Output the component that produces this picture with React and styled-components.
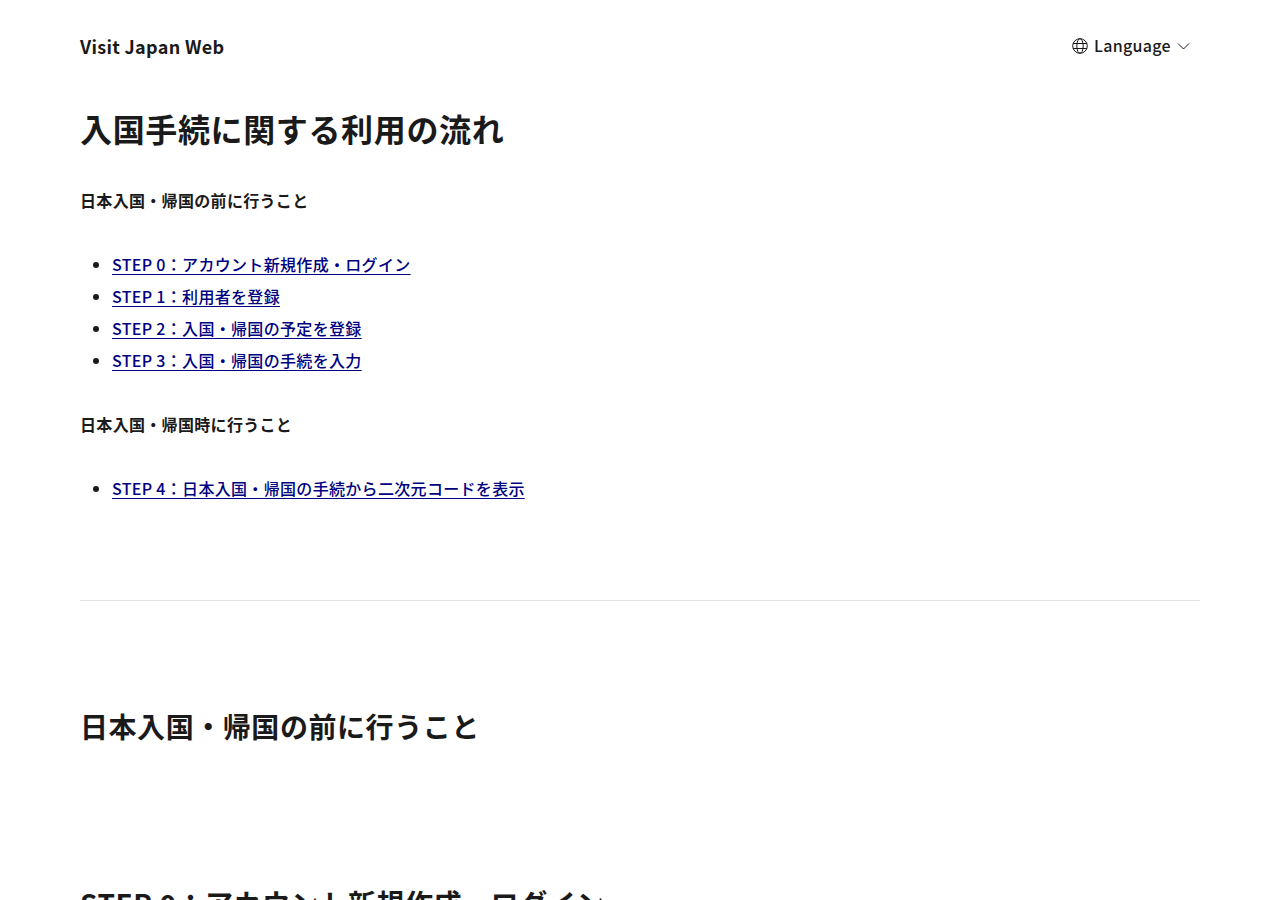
import styled, { createGlobalStyle } from "styled-components";

const GlobalStyle = createGlobalStyle`
  html, body {
    margin: 0;
    padding: 0;
    background: #fff;
    color: #1a1a1a;
    font-family: "Noto Sans CJK JP", "Noto Sans", sans-serif;
    letter-spacing: 0.02em;
  }
  body {
    height: 900px;
    overflow: hidden;
  }
`;

const Page = styled.div`
  padding: 0 80px;
`;

const Header = styled.header`
  display: flex;
  align-items: center;
  justify-content: space-between;
  height: 92px;
`;

const Logo = styled.a`
  font-size: 18px;
  font-weight: 700;
  color: #1a1a1a;
`;

const LangButton = styled.div`
  display: flex;
  align-items: center;
  gap: 6px;
  margin: 0 10px 2px 0;
  font-size: 16px;
  font-weight: 500;

  svg {
    margin-top: 2px;
  }
`;

const Globe = styled.svg`
  width: 16px;
  height: 16px;
`;

const Chevron = styled.svg`
  width: 13px;
  height: 8px;
`;

const Title = styled.h1`
  margin: 12px 0 0;
  font-size: 32px;
  line-height: 48px;
  font-weight: 700;
  letter-spacing: 0.02em;
`;

const SubHead = styled.p`
  margin: 32px 0 0;
  font-size: 16px;
  line-height: 32px;
  font-weight: 700;
`;

const StepList = styled.ul`
  margin: 32px 0 0;
  padding: 0 0 0 32px;
  list-style: disc;
`;

const StepItem = styled.li`
  font-size: 16px;
  line-height: 32px;
  font-weight: 500;
`;

const StepLink = styled.a`
  color: #000080;
  text-decoration: underline;
  text-decoration-thickness: 1px;
  text-underline-offset: 3px;
`;

const Rule = styled.hr`
  margin: 96px 0 0;
  border: 0;
  border-top: 1px solid #e5e5e5;
`;

const SectionTitle = styled.h2`
  margin: 101px 0 0;
  font-size: 28px;
  line-height: 48px;
  font-weight: 700;
  letter-spacing: 0.02em;
`;

const StepTitle = styled.h3`
  margin: 132px 0 0;
  font-size: 28px;
  line-height: 42px;
  font-weight: 700;
  letter-spacing: 0.02em;
`;

const GlobeIcon = () => (
  <Globe viewBox="0 0 16 16" fill="none" stroke="#1a1a1a" strokeWidth="1">
    <circle cx="8" cy="8" r="7.3" />
    <ellipse cx="8" cy="8" rx="3.2" ry="7.3" />
    <path d="M1 5.5h14M1 10.5h14" />
  </Globe>
);

const ChevronIcon = () => (
  <Chevron viewBox="0 0 13 8" fill="none" stroke="#1a1a1a" strokeWidth="1">
    <path d="M1 1.5l5.5 5.5 5.5-5.5" />
  </Chevron>
);

const beforeSteps = [
  "STEP 0：アカウント新規作成・ログイン",
  "STEP 1：利用者を登録",
  "STEP 2：入国・帰国の予定を登録",
  "STEP 3：入国・帰国の手続を入力",
];

const App = () => {
  return (
    <>
      <GlobalStyle />
      <Page>
        <Header>
          <Logo>Visit Japan Web</Logo>
          <LangButton>
            <GlobeIcon />
            Language
            <ChevronIcon />
          </LangButton>
        </Header>
        <main>
          <Title>入国手続に関する利用の流れ</Title>
          <SubHead>日本入国・帰国の前に行うこと</SubHead>
          <StepList>
            {beforeSteps.map((step) => (
              <StepItem key={step}>
                <StepLink href="#">{step}</StepLink>
              </StepItem>
            ))}
          </StepList>
          <SubHead>日本入国・帰国時に行うこと</SubHead>
          <StepList>
            <StepItem>
              <StepLink href="#">STEP 4：日本入国・帰国の手続から二次元コードを表示</StepLink>
            </StepItem>
          </StepList>
          <Rule />
          <SectionTitle>日本入国・帰国の前に行うこと</SectionTitle>
          <StepTitle>STEP 0：アカウント新規作成・ログイン</StepTitle>
        </main>
      </Page>
    </>
  );
};

export default App;
